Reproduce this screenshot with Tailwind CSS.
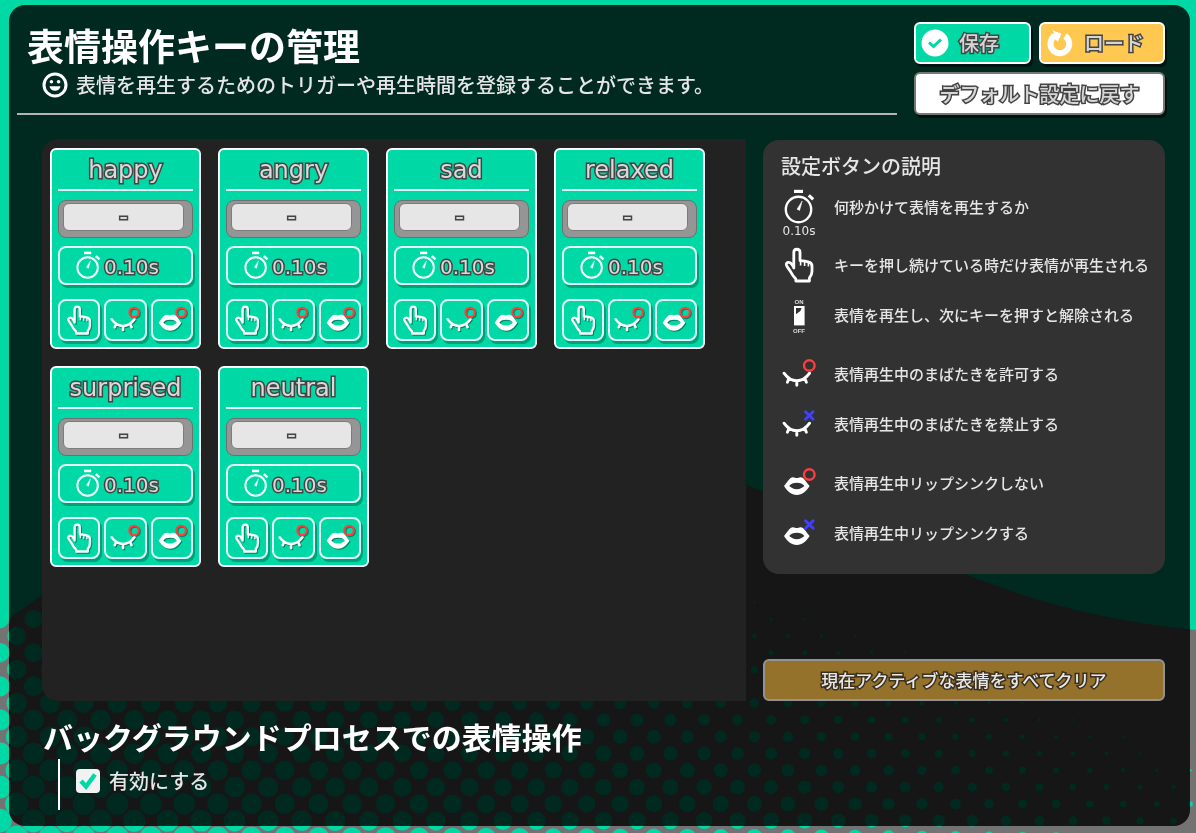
<!DOCTYPE html>
<html lang="ja">
<head>
    <meta charset="UTF-8">
    <meta name="viewport" content="width=device-width, initial-scale=1.0">
    <title>表情操作キーの管理</title>
    <script src="https://cdn.jsdelivr.net/npm/@tailwindcss/browser@4"></script>
</head>
<body class="bg-[#6f6f6f] text-[#e6e6e6] font-['Noto_Sans_CJK_JP',sans-serif] font-medium min-h-screen flex pt-[5px] pr-1.5 pb-[7px] pl-[9px]">
    <!-- Halftone background -->
    <svg class="fixed inset-0 w-full h-full -z-10" viewBox="0 0 1196 833" preserveAspectRatio="xMidYMax slice" aria-hidden="true">
        <rect width="1196" height="833" fill="#737373"/>
        <path d="M0 0H1196V630C1110 621 1040 604 968 575C890 543 820 515 752 487C520 400 260 450 42 595L0 625Z" fill="#00d9a5"/>
        <g id="dots" fill="#00d9a5"></g>
    </svg>

    <!-- Icons -->
    <svg class="hidden" aria-hidden="true">
        <symbol id="stopwatch" viewBox="0 0 32 36">
            <rect x="11" y="0.8" width="9" height="3.2" fill="#fff"/>
            <circle cx="15.5" cy="20.5" r="12.7" fill="none" stroke="#fff" stroke-width="2.4"/>
            <path d="M25.8 6.4L30.2 10.4" stroke="#fff" stroke-width="3.2"/>
            <path d="M14 20.2L19.2 12L16.6 21.4Z" fill="#fff" stroke="#fff" stroke-width=".5"/>
        </symbol>
        <symbol id="hand" viewBox="0 0 32 38">
            <path d="M10.8 22V6.4C10.8 2.2 17 2.2 17 6.4V14.6L22 15.2L26 16.2Q29 17.2 29 20.4V25.2Q29 29 26.4 32V35H12.8V33Q9.4 29.4 7.8 26L4 20.4Q2.2 17.4 5 16.4Q7.4 15.8 9 18.6L10.8 21.4" fill="none" stroke="#fff" stroke-width="2.8" stroke-linejoin="round" stroke-linecap="round"/>
            <path d="M17.6 15V19.4M21.6 15.6V20M25.4 16.6V20.4" stroke="#fff" stroke-width="1.6"/>
        </symbol>
        <symbol id="toggle" viewBox="0 0 32 38">
            <text x="16" y="7.5" text-anchor="middle" font-size="6" font-weight="700" font-family="Liberation Sans, sans-serif" fill="#ddd">ON</text>
            <rect x="11" y="10" width="10.6" height="19.4" fill="#fff"/>
            <path d="M13 12H18.6L17.4 15L13 18.2Z" fill="#323232"/>
            <text x="16" y="36.5" text-anchor="middle" font-size="6" font-weight="700" font-family="Liberation Sans, sans-serif" fill="#ddd">OFF</text>
        </symbol>
        <symbol id="eye" viewBox="0 0 36 36">
            <path d="M3 17.2Q8.5 24.8 15.8 24.8T28.6 17.2M8 22.4L6.4 26.2M15.8 25V29.2M23.8 22.4L25.4 26.2" fill="none" stroke="#fff" stroke-width="2.9" stroke-linecap="round"/>
        </symbol>
        <symbol id="lips" viewBox="0 0 36 36">
            <path fill="#fff" fill-rule="evenodd" d="M3 21C6.5 17 8.6 12.2 12 12.2C13.6 12.2 14.4 13 15.8 13C17.2 13 18 12.2 19.6 12.2C23 12.2 25 17 28.6 21C25 26.5 21.4 30 15.8 30S6.6 26.5 3 21ZM8.2 21C10.500 23 12.500 24.200 15.800 24.200S21.200 23 23.400 21C21.600 18.600 19.400 17.800 15.800 17.800S10 18.600 8.200 21Z"/>
        </symbol>
        <symbol id="allow" viewBox="0 0 36 36">
            <circle cx="28.3" cy="9.5" r="5.3" fill="none" stroke="#ff3d3d" stroke-width="2.4"/>
        </symbol>
        <symbol id="deny" viewBox="0 0 36 36">
            <path d="M24.500 5.700L32.100 13.300M32.100 5.700L24.500 13.300" stroke="#4040ff" stroke-width="2.900" stroke-linecap="round"/>
        </symbol>
    </svg>

    <div class="flex-1 flex flex-col bg-black/81 rounded-2xl pr-[25px]">
        <!-- Header -->
        <header class="flex gap-[17px] pl-2">
            <div class="flex-1 border-b-2 border-[#b4b4b4] pl-2.5 pt-5">
                <h1 class="text-[37px] leading-10 font-bold text-white">表情操作キーの管理</h1>
                <p class="flex items-center gap-2 pl-[15px] text-xl leading-7 pt-1.5">
                    <svg class="size-[26px]" viewBox="0 0 26 26" fill="none" aria-hidden="true">
                        <circle cx="13" cy="13" r="11" stroke="#fff" stroke-width="3"/>
                        <circle cx="9.4" cy="9.7" r="1.8" fill="#fff"/>
                        <circle cx="16.6" cy="9.7" r="1.8" fill="#fff"/>
                        <path d="M7.5 14.2H18.5C17.5 20.3 8.5 20.3 7.5 14.2Z" fill="#fff"/>
                    </svg>
                    表情を再生するためのトリガーや再生時間を登録することができます。
                </p>
            </div>
            <div class="w-[251px] grid grid-cols-[117px_1fr] gap-x-2 gap-y-2 pt-[17px] text-xl text-[#d6d6d6] [paint-order:stroke_fill] [-webkit-text-stroke:3px_#444]">
                <button type="button" class="h-[42px] flex items-center gap-2.5 pl-[5px] rounded-md border-2 border-white bg-[#00d9a5] shadow-[2px_3px_0_#0008]">
                    <svg class="size-7" viewBox="0 0 28 28" fill="none" aria-hidden="true">
                        <circle cx="14" cy="14" r="13.500" fill="#fff"/>
                        <path d="M8 13.500L12.500 17.500L20 10.500" stroke="#00d9a5" stroke-width="3"/>
                    </svg>
                    保存
                </button>
                <button type="button" class="h-[42px] flex items-center gap-2.5 pl-[5px] rounded-md border-2 border-white bg-[#ffc850] shadow-[2px_3px_0_#0008]">
                    <svg class="size-7" viewBox="0 0 28 28" fill="none" aria-hidden="true">
                        <path d="M19 7A9.400 9.400 0 1 1 8.200 7.300" stroke="#fff" stroke-width="6"/>
                        <path d="M6.500 1.200L15.500 4.800L11.800 12.800L5 5.800L8 4.600Z" fill="#fff"/>
                    </svg>
                    ロード
                </button>
                <button type="button" class="col-span-2 h-[43px] rounded-md border-2 border-[#777] bg-white shadow-[2px_3px_0_#0008]">デフォルト設定に戻す</button>
            </div>
        </header>

        <!-- Expressions and help -->
        <main class="flex gap-[17px] pl-[33px] mt-6">
            <section id="cards" class="flex-1 h-[562px] grid grid-cols-[repeat(4,151px)] content-start gap-[17px] bg-[#222] rounded-l-2xl pt-[9px] pl-2"></section>

            <div class="w-[402px] flex flex-col justify-between">
                <section class="bg-[#323232] rounded-2xl mt-px pl-[18px] pt-3 pb-4 text-[15px]">
                    <h2 class="text-xl leading-7 mb-0.5">設定ボタンの説明</h2>
                    <ul>
                        <li class="flex gap-[17px] h-[58px]">
                            <div class="w-9 flex flex-col items-center pt-[7px]">
                                <svg class="w-8 h-9 shrink-0" aria-hidden="true"><use href="#stopwatch"/></svg>
                                <span class="text-xs leading-3 font-['DejaVu_Sans',sans-serif]">0.10s</span>
                            </div>
                            <span class="leading-[50px]">何秒かけて表情を再生するか</span>
                        </li>
                        <li class="flex gap-[17px] items-center h-[50px]">
                            <span class="w-9 flex justify-center"><svg class="w-8 h-[38px]" aria-hidden="true"><use href="#hand"/></svg></span>
                            キーを押し続けている時だけ表情が再生される
                        </li>
                        <li class="flex gap-[17px] items-center h-[50px] mb-[9px]">
                            <span class="w-9 flex justify-center"><svg class="w-8 h-[38px]" aria-hidden="true"><use href="#toggle"/></svg></span>
                            表情を再生し、次にキーを押すと解除される
                        </li>
                        <li class="flex gap-[17px] items-center h-[50px]">
                            <svg class="size-9" aria-hidden="true"><use href="#eye"/><use href="#allow"/></svg>
                            表情再生中のまばたきを許可する
                        </li>
                        <li class="flex gap-[17px] items-center h-[50px] mb-[9px]">
                            <svg class="size-9" aria-hidden="true"><use href="#eye"/><use href="#deny"/></svg>
                            表情再生中のまばたきを禁止する
                        </li>
                        <li class="flex gap-[17px] items-center h-[50px]">
                            <svg class="size-9" aria-hidden="true"><use href="#lips"/><use href="#allow"/></svg>
                            表情再生中リップシンクしない
                        </li>
                        <li class="flex gap-[17px] items-center h-[50px]">
                            <svg class="size-9" aria-hidden="true"><use href="#lips"/><use href="#deny"/></svg>
                            表情再生中リップシンクする
                        </li>
                    </ul>
                </section>
                <button type="button" class="h-[42px] rounded-md border-2 border-[#939393] bg-[#94722c] text-[17px] text-[#e8e8e8] [paint-order:stroke_fill] [-webkit-text-stroke:3px_#3a3020]">現在アクティブな表情をすべてクリア</button>
            </div>
        </main>

        <!-- Background process -->
        <section class="pl-[34px] pt-3.5">
            <h2 class="text-[30px] leading-[42px] mb-0.5 font-bold text-white">バックグラウンドプロセスでの表情操作</h2>
            <div class="ml-[15px] h-[51px] border-l-2 border-white pl-4 pt-2">
                <label class="inline-flex items-center gap-[9px] text-xl leading-7">
                    <span class="grid">
                        <input type="checkbox" checked class="peer [grid-area:1/1] appearance-none size-6 rounded-sm bg-[#f2f2f2]">
                        <svg class="[grid-area:1/1] size-6 pointer-events-none invisible peer-checked:visible" viewBox="0 0 24 24" fill="none" aria-hidden="true">
                            <path d="M5 12L10 17.500L19 5.500" stroke="#00d9a5" stroke-width="4.500"/>
                        </svg>
                    </span>
                    有効にする
                </label>
            </div>
        </section>
    </div>

    <script>
        // Expression cards
        const expressions = ['happy', 'angry', 'sad', 'relaxed', 'surprised', 'neutral'];

        document.getElementById('cards').innerHTML = expressions.map(name => `
            <article class="flex flex-col rounded-md border-2 border-white bg-[#00d9a5] px-1.5 pb-1.5 font-['DejaVu_Sans','Noto_Sans_CJK_JP',sans-serif] text-[#dadada] [paint-order:stroke_fill] [-webkit-text-stroke:3px_#444]">
                <h3 class="h-[41px] border-b-2 border-white/90 text-center text-2xl leading-10">${name}</h3>
                <button type="button" aria-label="${name}" class="mt-[9px] h-[38px] flex rounded-lg border border-[#6f6f6f] bg-[#959595] pl-1 pr-2 pt-0.5 pb-1.5">
                    <span class="flex-1 h-7 rounded-md border border-[#7c7c7c] bg-[#e6e6e6] text-2xl leading-[26px]">-</span>
                </button>
                <button type="button" class="mt-2 h-[39px] flex items-center gap-[3px] rounded-lg border-2 border-white/90 pl-[15px] pt-0.5 text-xl shadow-[2px_3px_0_#00a07a]">
                    <svg class="w-[26px] h-[29px] mb-0.5" aria-hidden="true"><use href="#stopwatch"/></svg>
                    0.10s
                </button>
                <div class="mt-[14px] h-[42px] grid grid-cols-3 gap-1">
                    <button type="button" aria-label="hold" class="grid place-items-center rounded-lg border-2 border-white/90 shadow-[2px_3px_0_#00a07a]">
                        <svg class="w-7 h-8 drop-shadow-[1px_1px_0_#0006]" aria-hidden="true"><use href="#hand"/></svg>
                    </button>
                    <button type="button" aria-label="blink" class="grid place-items-center rounded-lg border-2 border-white/90 shadow-[2px_3px_0_#00a07a]">
                        <svg class="size-8 drop-shadow-[1px_1px_0_#0006]" aria-hidden="true"><use href="#eye"/><use href="#allow"/></svg>
                    </button>
                    <button type="button" aria-label="lip sync" class="grid place-items-center rounded-lg border-2 border-white/90 shadow-[2px_3px_0_#00a07a]">
                        <svg class="size-8 drop-shadow-[1px_1px_0_#0006]" aria-hidden="true"><use href="#lips"/><use href="#allow"/></svg>
                    </button>
                </div>
            </article>`).join('');

        // Halftone dots, growing towards the bottom left
        const step = 33.53;
        let dots = '';
        for (let row = 0; row < 16; row++) {
            const y = 585.5 + row * 16.8;
            for (let col = -1; col < 37; col++) {
                const x = 16.7 + col * step + (row % 2 ? 0 : step / 2);
                const u = y + 0.38 * (754 - x) - 560;
                const r = Math.min(u * 0.032, 8 + (u - 250) * 0.013);
                if (r > 0.3) dots += `<circle cx="${x.toFixed(1)}" cy="${y.toFixed(1)}" r="${r.toFixed(1)}"/>`;
            }
        }
        document.getElementById('dots').innerHTML = dots;
    </script>
</body>
</html>
